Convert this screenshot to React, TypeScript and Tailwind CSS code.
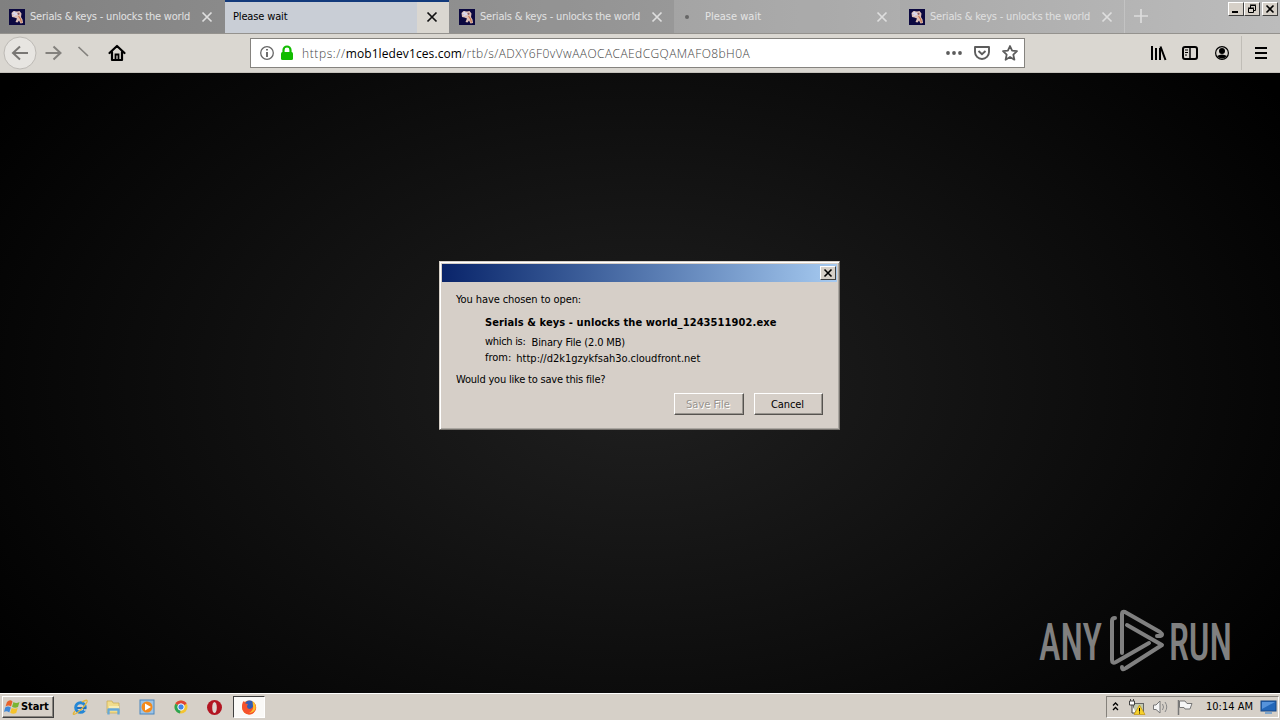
import type { ReactNode } from "react";

const UI = "font-['DejaVu_Sans_Condensed','DejaVu_Sans',sans-serif] [font-stretch:condensed]";

function Favicon() {
  return (
    <svg width="16" height="16" viewBox="0 0 16 16" className="shrink-0">
      <rect width="16" height="16" fill="#0b0840" />
      <path d="M2.500 4 L4.500 2 L8 2.500 L10.500 2 L12.500 4.500 L12 8 L13.500 10.500 L14 14 L11.500 14.500 L10 11.500 L8.500 13.500 L6.500 13 L8 9.500 L5.500 8.500 L3 8Z" fill="#dec0b6" />
      <path d="M3.500 5 L5.500 3.500 L6.500 5.500 L4.500 7 M7 4 L8.500 6" stroke="#d9d9f2" strokeWidth="1.500" fill="none" />
      <path d="M9.500 7 L11.500 10 L12.500 13.500" stroke="#c9774e" strokeWidth="1.200" fill="none" />
      <circle cx="9.500" cy="4.800" r="1.100" fill="#8a5a60" />
    </svg>
  );
}

function Cross({ color }: { color: string }) {
  return (
    <svg width="12" height="12" viewBox="0 0 12 12" className="shrink-0">
      <path d="M1.500 1.500 L10.500 10.500 M10.500 1.500 L1.500 10.500" stroke={color} strokeWidth="1.700" />
    </svg>
  );
}

function SerialsTab({ className }: { className: string }) {
  return (
    <div className={`flex h-[33px] shrink-0 items-center ${className}`}>
      <Favicon />
      <span className="ml-[5px] w-[162px] pt-px text-[11px] tracking-[-0.2px] whitespace-nowrap">Serials &amp; keys - unlocks the world</span>
      <span className="ml-[9px] flex"><Cross color="#dedede" /></span>
    </div>
  );
}

function CaptionButton({ children, className }: { children: ReactNode; className: string }) {
  return (
    <div className={`flex items-center justify-center border border-t-white border-l-white border-r-[#404040] border-b-[#404040] bg-[#d6d0c8] ${className}`}>
      {children}
    </div>
  );
}

function TabStrip() {
  return (
    <div className="flex h-[33px] bg-linear-to-r from-[#808080] to-[#bcbcbc]">
      <SerialsTab className="w-[225px] pl-[9px] text-[#e2e2e2]" />
      <div className="flex h-[33px] w-[224px] shrink-0 items-center border-t-2 border-[#123a7c] bg-[#c9ced6]">
        <span className="grow pl-2 text-[11px] tracking-[-0.15px] text-black">Please wait</span>
        <div className="flex h-full w-8 items-center justify-center bg-[#dad7d1] pr-[2px] pb-px"><Cross color="#111" /></div>
      </div>
      <SerialsTab className="w-[225px] bg-black/4 pl-[10px] text-[#e2e2e2]" />
      <div className="flex h-[33px] w-[226px] shrink-0 items-center bg-white/5 pl-[11px]">
        <span className="size-1 rounded-full bg-[#666]" />
        <span className="ml-4 w-[171px] pt-px text-[11px] text-[#e4e4e4]">Please wait</span>
        <Cross color="#dedede" />
      </div>
      <SerialsTab className="w-[225px] border-r border-white/20 pl-[9px] text-[#e0e0e0]" />
      <svg width="32" height="32" viewBox="0 0 32 32" className="shrink-0">
        <path d="M16 9 V23 M9 16 H23" stroke="#dcdcdc" strokeWidth="1.700" />
      </svg>
      <div className="mt-[2px] ml-auto flex h-[14px] pr-[2px]">
        <CaptionButton className="w-4"><svg width="14" height="12"><path d="M3 9 H9" stroke="#000" strokeWidth="2" /></svg></CaptionButton>
        <CaptionButton className="w-4"><svg width="14" height="12"><path d="M5.500 5 V2.500 H10.500 V7.500 H9 M5 2 H11 M3 5 H9 M3.500 5.500 H8.500 V9.500 H3.500Z" stroke="#000" fill="none" /></svg></CaptionButton>
        <CaptionButton className="ml-[2px] w-4"><svg width="14" height="12"><path d="M3.500 2.500 L10.500 9.500 M10.500 2.500 L3.500 9.500" stroke="#000" strokeWidth="1.600" /></svg></CaptionButton>
      </div>
    </div>
  );
}

function NavBar() {
  return (
    <div className="flex h-10 items-center border-t border-b border-t-[#94928e] border-b-[#c4c1bb] bg-[#dad7d1]">
      <svg width="250" height="38" viewBox="0 34 250 38" className="shrink-0" fill="none">
        <circle cx="20" cy="53" r="16" fill="#e7e5e1" stroke="#bdbab5" />
        <path d="M28 53 H13.500 M20 46.500 L13 53 L20 59.500" stroke="#797774" strokeWidth="2" />
        <path d="M45.500 53 H60 M53.500 46.500 L60.500 53 L53.500 59.500" stroke="#83817d" strokeWidth="2" />
        <path d="M78.500 47 L88 56" stroke="#83817d" strokeWidth="1.700" />
        <path d="M109.500 53 L117 46 L124.500 53 M112 52 V60 H122 V52" stroke="#000" strokeWidth="2.200" strokeLinejoin="round" strokeLinecap="round" />
        <path d="M115.500 60 V54.500 H118.500 V60" stroke="#000" strokeWidth="1.800" />
      </svg>
      <div className="flex h-[30px] w-[775px] shrink-0 items-center border border-[#85837f] bg-white">
        <svg width="51" height="28" viewBox="251 39 51 28" className="shrink-0" fill="none">
          <circle cx="267" cy="53" r="6.300" stroke="#676767" strokeWidth="1.300" />
          <path d="M267 52 V57 M267 49 V50.600" stroke="#555" strokeWidth="1.700" />
          <rect x="281" y="52" width="12" height="8" rx="1.500" fill="#12bc00" />
          <path d="M283.500 53 V50 A3.500 3.500 0 0 1 290.500 50 V53" stroke="#12bc00" strokeWidth="2.200" />
        </svg>
        <span className="w-[643px] pt-px font-['Open_Sans',sans-serif] text-[12px] font-light tracking-[0.42px] [font-stretch:normal] whitespace-nowrap text-[#444]">
          <span className="tracking-[0.6px]">https://</span><span className="font-normal tracking-[0.1px] text-black">mob1ledev1ces.com</span>/rtb/s/ADXY6F0vVwAAOCACAEdCGQAMAFO8bH0A
        </span>
        <svg width="79" height="28" viewBox="945 39 79 28" className="shrink-0" fill="none">
          <g fill="#5c5c5c"><circle cx="948" cy="53" r="1.900" /><circle cx="954" cy="53" r="1.900" /><circle cx="960" cy="53" r="1.900" /></g>
          <path d="M975 47 H989 V52 A7 7 0 0 1 975 52Z" stroke="#5c5c5c" strokeWidth="1.900" strokeLinejoin="round" />
          <path d="M978.500 51 L982 54.300 L985.500 51" stroke="#5c5c5c" strokeWidth="1.900" />
          <path d="M1010 46 L1012.100 50.700 L1017 51.200 L1013.300 54.600 L1014.400 59.700 L1010 57 L1005.600 59.700 L1006.700 54.600 L1003 51.200 L1007.900 50.700Z" stroke="#5c5c5c" strokeWidth="1.800" strokeLinejoin="round" />
        </svg>
      </div>
      <svg width="255" height="38" viewBox="1025 34 255 38" className="shrink-0" fill="none" stroke="#000">
        <path d="M1152 46 V60 M1156 48 V60 M1160 48 V60 M1160.500 46.500 L1165.500 60" strokeWidth="2" />
        <rect x="1183" y="47" width="14" height="12" rx="2" strokeWidth="2" />
        <path d="M1190 47 V59" strokeWidth="1.500" /><path d="M1185 50 H1188 M1185 52.500 H1188 M1185 55 H1187" strokeWidth="1" />
        <circle cx="1222" cy="53" r="6.400" strokeWidth="1.200" />
        <circle cx="1222" cy="51" r="3" fill="#000" stroke="none" /><path d="M1217 56 Q1222 53 1227 56 Q1222 61 1217 56Z" fill="#000" stroke="none" />
        <path d="M1241.500 36 V70" stroke="#c0bdb7" />
        <path d="M1255 48 H1267 M1255 53 H1267 M1255 58 H1267" strokeWidth="2" />
      </svg>
    </div>
  );
}

function Dialog() {
  return (
    <div className="absolute top-[188px] left-[439px] h-[169px] w-[401px] border border-t-[#d6d0c8] border-l-[#d6d0c8] border-r-[#77736e] border-b-[#77736e] bg-[#d6cfc8] text-[11px] leading-[14px] text-black shadow-[inset_1px_1px_0_#fff,inset_-1px_-1px_0_#aaa6a0]">
      <div className="mx-[2px] mt-[2px] flex h-[18px] items-center justify-end bg-linear-to-r from-[#0a246a] to-[#a6caf0] pr-px">
        <CaptionButton className="h-[14px] w-4"><svg width="14" height="12"><path d="M3.500 2.500 L10.500 9.500 M10.500 2.500 L3.500 9.500" stroke="#000" strokeWidth="1.600" /></svg></CaptionButton>
      </div>
      <div className="pt-[11px] pl-4">
        <p className="tracking-[-0.08px] whitespace-nowrap">You have chosen to open:</p>
        <div className="pl-[29px]">
          <p className="mt-[9px] font-bold tracking-[0.1px] whitespace-nowrap">Serials &amp; keys - unlocks the world_1243511902.exe</p>
          <p className="mt-[5px] flex gap-[6px] whitespace-nowrap"><span className="tracking-[-0.3px]">which is:</span><span className="pt-px tracking-[-0.15px]">Binary File (2.0 MB)</span></p>
          <p className="mt-px flex gap-[5px] whitespace-nowrap"><span>from:</span><span className="pt-px">http://d2k1gzykfsah3o.cloudfront.net</span></p>
        </div>
        <p className="mt-[7px] tracking-[-0.2px] whitespace-nowrap">Would you like to save this file?</p>
      </div>
      <div className="mt-[6px] mr-4 flex justify-end gap-[10px]">
        <div className="flex h-[22px] w-[70px] items-center justify-center border border-t-white border-l-white border-r-[#56534f] border-b-[#56534f] pt-px pr-[2px] text-[#98948e] shadow-[inset_-1px_-1px_0_#99958f] [text-shadow:1px_1px_0_#fff]">Save File</div>
        <div className="flex h-[22px] w-[69px] items-center justify-center border border-t-white border-l-white border-r-[#56534f] border-b-[#56534f] pt-px pr-[2px] tracking-[-0.1px] shadow-[inset_-1px_-1px_0_#99958f]">Cancel</div>
      </div>
    </div>
  );
}

function Watermark() {
  return (
    <svg width="220" height="80" viewBox="1035 600 220 80" className="absolute top-[527px] left-[1035px]">
      <g fill="#808080" fontFamily="Roboto, sans-serif" fontSize="52" fontWeight="500">
        <text x="1039" y="659.500" textLength="63" lengthAdjust="spacingAndGlyphs">ANY</text>
        <text x="1169" y="659.500" textLength="63" lengthAdjust="spacingAndGlyphs">RUN</text>
      </g>
      <g fill="none" stroke="#808080" strokeWidth="4" strokeLinecap="round" strokeLinejoin="round">
        <path d="M1122 653 V614 Q1122 611 1125 612 L1160 632 Q1164 635 1160 636 L1157 636" />
        <path d="M1115 618 Q1112 618 1112 621 V660 Q1112 664 1116 662 L1149 643" />
        <path d="M1127 625 L1162 645 L1126 668 Q1122 671 1122 667" />
      </g>
    </svg>
  );
}

function Taskbar() {
  return (
    <div className="flex h-[27px] items-start bg-[#d6d0c8] pt-[3px] shadow-[inset_0_1px_0_#fff]">
      <div className="ml-[2px] flex h-[22px] w-[52px] shrink-0 items-center border border-t-white border-l-white border-r-[#404040] border-b-[#404040] pl-px shadow-[inset_-1px_-1px_0_#88847e]">
        <svg width="17" height="16" viewBox="0 0 17 16" className="shrink-0">
          <path d="M3 3 Q6 0 8.500 2.500 L7 7.500 Q4.500 5.500 1.500 7.500Z" fill="#e8622a" />
          <path d="M9.500 3 Q12 5 15.500 3 L14 8 Q11 9.500 8 7.800Z" fill="#7ab534" />
          <path d="M1.200 8.500 Q4 6.500 6.800 8.500 L5.300 13.500 Q2.500 11.500 0 13Z" fill="#3f88d8" />
          <path d="M7.700 9 Q10.500 10.500 13.700 9 L12.200 14 Q9 15.500 6.200 13.800Z" fill="#f5c32c" />
        </svg>
        <span className="text-[11px] font-bold tracking-[-0.1px] text-black">Start</span>
      </div>
      <svg width="179" height="24" viewBox="54 696 179 24" className="shrink-0" fill="none">
        <circle cx="80.500" cy="707.500" r="4.800" stroke="#2587d6" strokeWidth="3" />
        <path d="M77 708 H86" stroke="#1f6fc0" strokeWidth="2" /><path d="M84 710 H88" stroke="#d6d0c8" strokeWidth="1.500" />
        <path d="M75 711 Q71 716 76 713.500 Q83 709 87 702 Q88 698.500 82 702" stroke="#e3b53a" strokeWidth="1.300" />
        <path d="M107 701 H112 L113 703 H119 V713 H107Z" fill="#f1dc8c" stroke="#c9a94e" strokeWidth=".7" /><path d="M109 706 H119 V711 H109Z" fill="#f8edb4" /><path d="M108.500 714.500 V709.500 H118.500 V714.500" stroke="#66a8d8" strokeWidth="2.300" strokeLinejoin="round" />
        <rect x="140" y="700" width="14" height="14" fill="#9cc3e6" stroke="#4b86be" /><circle cx="147" cy="707" r="5.500" fill="#f48a1c" /><path d="M145 703.500 L151 707 L145 710.500Z" fill="#fff" />
        <circle cx="181" cy="707" r="6.500" fill="#f4c430" />
        <path d="M181 707 L175.400 703.700 A6.500 6.500 0 0 1 186.600 703.700Z" fill="#df4435" /><path d="M181 707 L175.400 703.700 A6.500 6.500 0 0 0 180 713.500Z" fill="#2ca453" />
        <circle cx="181" cy="707" r="3.200" fill="#4285e8" stroke="#fff" />
        <ellipse cx="214.500" cy="707.500" rx="7.500" ry="7.500" fill="#b31522" /><ellipse cx="214.500" cy="707.500" rx="2.300" ry="5.500" fill="#ded6d2" />
      </svg>
      <div className="flex h-[22px] w-8 shrink-0 items-center justify-center border border-t-[#404040] border-l-[#404040] border-r-white border-b-white bg-[#faf9f7]">
        <svg width="16" height="16" viewBox="0 0 16 16">
          <circle cx="8" cy="8.500" r="7" fill="#f7761f" /><circle cx="8.500" cy="6.500" r="5" fill="#315cb5" />
          <path d="M1 8 Q1 3 3 2 L4.500 4.500 L7 5 L6 7 Q6 10 9 10 Q11 9.500 12.500 7 L12 3 Q16 6 15 10 Q13 15.500 8 15.500 Q2 15 1 8Z" fill="#f5512c" />
          <path d="M11.500 2 Q15.500 5 14.500 10 Q12.500 14 8 14 Q13 11 12 7Z" fill="#fdbd2c" />
        </svg>
      </div>
      <div className="mr-px ml-auto flex h-[22px] w-[173px] items-center border border-t-[#85817b] border-l-[#85817b] border-r-white border-b-white text-[11px] text-black">
        <svg width="99" height="20" viewBox="1107 697 99 20" className="shrink-0" fill="none">
          <path d="M1113 705.500 L1115.500 703 L1118 705.500 M1113 710 L1115.500 707.500 L1118 710" stroke="#000" strokeWidth="1.300" />
          <rect x="1133.500" y="703.500" width="10" height="8" fill="#c3cab0" stroke="#666" /><path d="M1129.500 701 H1134.500 V705 H1129.500Z M1130.500 699 V701 M1133.500 699 V701 M1132 705 V713 H1136" stroke="#444" fill="#fff" />
          <path d="M1139.500 705 L1145 714.500 H1134Z" fill="#f6d12b" stroke="#c09210" strokeWidth=".7" /><path d="M1139.500 708 V711.500 M1139.500 712.500 V713.500" stroke="#000" />
          <path d="M1153.500 705 H1156 L1160 701 V713 L1156 709.500 H1153.500Z" fill="#f5f5f5" stroke="#777" /><path d="M1162.500 704 Q1164.500 707 1162.500 710 M1165 702 Q1168.500 707 1165 712" stroke="#888" />
          <path d="M1178.500 700 V715" stroke="#777" strokeWidth="1.500" /><path d="M1179.500 701 H1185 L1187 703.500 H1192 L1190 709 H1185 L1184 707.500 H1179.500Z" fill="#f6f6f6" stroke="#777" />
        </svg>
        <span className="w-[54px] pt-px whitespace-nowrap">10:14 AM</span>
        <svg width="17" height="16" viewBox="0 0 17 16" className="shrink-0"><rect x="1" y="2" width="15" height="10" fill="#2367b9" stroke="#164684" /><path d="M2 3 H15 L2 10Z" fill="#5693db" /><path d="M5 14 H12" stroke="#7fa6cc" strokeWidth="2" /></svg>
      </div>
    </div>
  );
}

export default function App() {
  return (
    <div className={`flex h-[720px] w-[1280px] flex-col overflow-hidden ${UI}`}>
      <TabStrip />
      <NavBar />
      <main className="relative grow bg-[radial-gradient(ellipse_780px_500px_at_50%_50%,#202020_0%,#000_100%)]">
        <Dialog />
        <Watermark />
      </main>
      <Taskbar />
    </div>
  );
}
